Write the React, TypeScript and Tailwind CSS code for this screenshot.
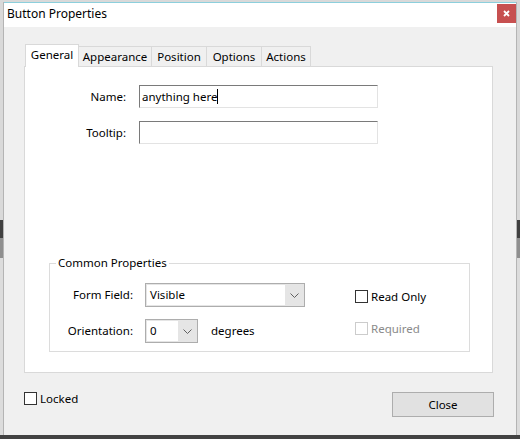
import React from "react";

const font = "font-['Noto_Sans','Liberation_Sans',sans-serif]";

function Chevron() {
  return (
    <svg width="9" height="5" viewBox="0 0 9 5" className="text-[#606060]">
      <path d="M0.5 0.5 L4.5 4.5 L8.5 0.5" fill="none" stroke="currentColor" strokeWidth="1" />
    </svg>
  );
}

function Combo({ value, width, field }: { value: string; width: string; field: string }) {
  return (
    <div className={`flex h-[24px] ${width} border border-[#adadad] bg-[#e5e5e5] p-px`}>
      <div className={`flex ${field} items-center bg-white pl-[3px]`}>{value}</div>
      <div className="flex flex-1 items-center justify-center">
        <Chevron />
      </div>
    </div>
  );
}

function Check({ label, disabled }: { label: string; disabled?: boolean }) {
  return (
    <div className={`flex h-[17px] items-center gap-[3px] ${disabled ? "text-[#8a8a8a]" : ""}`}>
      <span
        className={`h-[13px] w-[13px] border ${disabled ? "border-[#cccccc]" : "border-[#333333]"} bg-white`}
      />
      <span>{label}</span>
    </div>
  );
}

export default function App() {
  const tabs = [
    { name: "Appearance", w: "w-[73px]" },
    { name: "Position", w: "w-[55px]" },
    { name: "Options", w: "w-[55px]" },
    { name: "Actions", w: "w-[49px]" },
  ];
  return (
    <div
      className={`${font} h-[439px] w-[520px] overflow-hidden bg-[linear-gradient(to_bottom,#d9d9d9_0px,#d9d9d9_220px,#404040_220px,#404040_238px,#8f8f8f_238px,#8f8f8f_258px,#dcdcdc_258px,#dcdcdc_435px,#424242_435px)] pl-[3px] pt-[2px] text-[11.5px] text-black`}
    >
      <div className="flex h-[433px] w-[514px] flex-col border-x border-[#b4b4b4] bg-[#f0f0f0]">
        {/* title bar */}
        <div className="flex h-[25px] items-start justify-between border-t border-[#8ccfdc] bg-white">
          <span className="pl-[3px] pt-[3px] text-[12px] leading-[16px]">Button Properties</span>
          <div className="mt-px flex h-[19px] w-[19px] items-center justify-center bg-[#c75050]">
            <svg width="7" height="7" viewBox="0 0 7 7">
              <path d="M1 1 L6 6 M6 1 L1 6" stroke="white" strokeWidth="1.8" />
            </svg>
          </div>
        </div>

        {/* tabs */}
        <div className="ml-[20px] mt-[17px] flex items-end pl-px">
          <div className="z-10 -mb-px flex h-[23px] w-[54px] items-center justify-center border border-b-0 border-[#d9d9d9] bg-white pb-[2px]">
            General
          </div>
          {tabs.map((t) => (
            <div
              key={t.name}
              className={`flex h-[20px] ${t.w} items-center justify-center border-r border-t border-[#d9d9d9] bg-[#f0f0f0]`}
            >
              {t.name}
            </div>
          ))}
        </div>

        {/* tab panel */}
        <div className="ml-[20px] flex h-[307px] w-[469px] flex-col border border-[#d9d9d9] bg-white">
          <div className="mt-[18px] flex flex-col gap-[13px]">
            <div className="flex items-center">
              <span className="w-[101px] text-right">Name:</span>
              <div className="ml-[13px] flex h-[23px] w-[239px] items-center border border-b-[#e3e3e3] border-l-[#7a7a7a] border-r-[#e3e3e3] border-t-[#7a7a7a] pl-[2px]">
                anything here
                <span className="h-[15px] w-px bg-black" />
              </div>
            </div>
            <div className="flex items-center">
              <span className="w-[101px] text-right">Tooltip:</span>
              <div className="ml-[13px] h-[23px] w-[239px] border border-b-[#e3e3e3] border-l-[#7a7a7a] border-r-[#e3e3e3] border-t-[#7a7a7a]" />
            </div>
          </div>

          <fieldset className="mb-[20px] ml-[24px] mt-auto h-[97px] w-[421px] border border-[#dcdcdc]">
            <legend className="ml-[6px] px-[2px] leading-[16px]">Common Properties</legend>
            <div className="mt-[12px] flex">
              <div className="flex flex-col gap-[12px]">
                <div className="flex items-center">
                  <span className="w-[83px] text-right">Form Field:</span>
                  <div className="ml-[12px]">
                    <Combo value="Visible" width="w-[160px]" field="w-[138px]" />
                  </div>
                </div>
                <div className="flex items-center">
                  <span className="w-[83px] text-right">Orientation:</span>
                  <div className="ml-[12px]">
                    <Combo value="0" width="w-[53px]" field="w-[31px]" />
                  </div>
                  <span className="ml-[13px]">degrees</span>
                </div>
              </div>
              <div className="ml-[50px] flex flex-col gap-[15px] pt-[5px]">
                <Check label="Read Only" />
                <Check label="Required" disabled />
              </div>
            </div>
          </fieldset>
        </div>

        {/* footer */}
        <div className="ml-[20px] mr-[22px] mt-[19px] flex items-start justify-between">
          <div className="-mt-[2px]">
            <Check label="Locked" />
          </div>
          <div className="flex h-[25px] w-[102px] items-center justify-center border border-[#adadad] bg-[#e1e1e1]">
            Close
          </div>
        </div>
      </div>
    </div>
  );
}
